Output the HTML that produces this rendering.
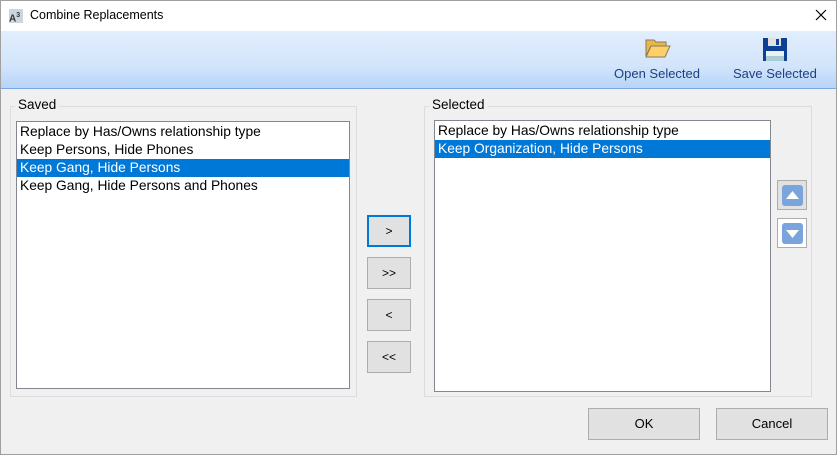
<!DOCTYPE html>
<html><head><style>
*{margin:0;padding:0;box-sizing:border-box}
body{width:837px;height:455px;background:#f0f0f0;font-family:"Liberation Sans",sans-serif;font-size:13px;color:#000;position:relative;overflow:hidden}
.abs{position:absolute}
.title{left:0;top:0;width:837px;height:31px;background:#fff}
.tb{left:0;top:31px;width:837px;height:58px;background:linear-gradient(#e2eefd,#d3e5fb 60%,#b7d4f8);border-bottom:1px solid #7aa7e0}
.tbt{color:#1e3f80;font-size:13px;top:66px}
.grp{border:1px solid #dcdcdc}
.lbl{background:#f0f0f0;padding:0 3px;font-size:13.5px}
.list{background:#fff;border:1px solid #828790}
.item{height:18px;line-height:18px;padding-left:3px;white-space:nowrap;font-size:13.8px}
.sel{background:#0078d7;color:#fff}
.btn{background:#e1e1e1;border:1px solid #adadad;text-align:center;font-size:12px}
.arr{background:#e1e1e1;border:1px solid #adadad}
</style></head><body>
<div class="abs title"></div>
<div class="abs" style="left:9px;top:9px;width:14px;height:14px;background:#cdd6dd;font-size:10px;font-weight:bold;color:#333;line-height:14px">A<sup style="font-size:7px">3</sup></div>
<div class="abs" style="left:30px;top:8px;font-size:12.5px">Combine Replacements</div>
<svg class="abs" style="left:815px;top:9px" width="12" height="12"><path d="M1 1L11 11M11 1L1 11" stroke="#000" stroke-width="1.2"/></svg>
<div class="abs tb"></div>
<svg class="abs" style="left:645px;top:38px" width="26" height="20" viewBox="0 0 26 20"><path d="M1 2h8l2 2h10v4H6L1 18z" fill="#e8b74a" stroke="#8a7a5a"/><path d="M6 8h19l-5 11H1z" fill="#fdd06a" stroke="#8a7a5a"/></svg>
<svg class="abs" style="left:762px;top:37px" width="26" height="25" viewBox="0 0 26 25"><rect x="1" y="1" width="24" height="23" fill="#0e3f96"/><rect x="6" y="1" width="13" height="8" fill="#e0e0e0"/><rect x="14" y="2" width="3" height="6" fill="#0e3f96"/><rect x="4" y="14" width="18" height="10" fill="#e8f0f0"/><rect x="4" y="19" width="18" height="5" fill="#a9ccd6"/></svg>
<div class="abs tbt" style="left:614px">Open Selected</div>
<div class="abs tbt" style="left:733px">Save Selected</div>

<div class="abs grp" style="left:10px;top:106px;width:347px;height:291px"></div>
<div class="abs lbl" style="left:15px;top:97px">Saved</div>
<div class="abs list" style="left:16px;top:121px;width:334px;height:268px;padding-top:1px">
<div class="item">Replace by Has/Owns relationship type</div>
<div class="item">Keep Persons, Hide Phones</div>
<div class="item sel">Keep Gang, Hide Persons</div>
<div class="item">Keep Gang, Hide Persons and Phones</div>
</div>

<div class="abs grp" style="left:424px;top:106px;width:388px;height:291px"></div>
<div class="abs lbl" style="left:429px;top:97px">Selected</div>
<div class="abs list" style="left:434px;top:120px;width:337px;height:272px;padding-top:1px">
<div class="item">Replace by Has/Owns relationship type</div>
<div class="item sel">Keep Organization, Hide Persons</div>
</div>

<div class="abs btn" style="left:367px;top:215px;width:44px;height:32px;border:2px solid #0078d7;line-height:28px">&gt;</div>
<div class="abs btn" style="left:367px;top:257px;width:44px;height:32px;line-height:30px">&gt;&gt;</div>
<div class="abs btn" style="left:367px;top:299px;width:44px;height:32px;line-height:30px">&lt;</div>
<div class="abs btn" style="left:367px;top:341px;width:44px;height:32px;line-height:30px">&lt;&lt;</div>

<div class="abs arr" style="left:777px;top:180px;width:30px;height:30px"><svg style="position:absolute;left:4px;top:4px" width="21" height="21"><rect width="21" height="21" rx="3" fill="#7aa4dc"/><path d="M4 14h13L10.5 6z" fill="#fff"/></svg></div>
<div class="abs arr" style="left:777px;top:218px;width:30px;height:30px;background:#fff"><svg style="position:absolute;left:4px;top:4px" width="21" height="21"><rect width="21" height="21" rx="3" fill="#7aa4dc"/><path d="M4 7h13L10.5 15z" fill="#fff"/></svg></div>

<div class="abs btn" style="left:588px;top:408px;width:112px;height:32px;line-height:30px;font-size:13px">OK</div>
<div class="abs btn" style="left:716px;top:408px;width:112px;height:32px;line-height:30px;font-size:13px">Cancel</div>
<div class="abs" style="left:0;top:0;width:837px;height:455px;border:1px solid #a0a0a0"></div>
</body></html>
